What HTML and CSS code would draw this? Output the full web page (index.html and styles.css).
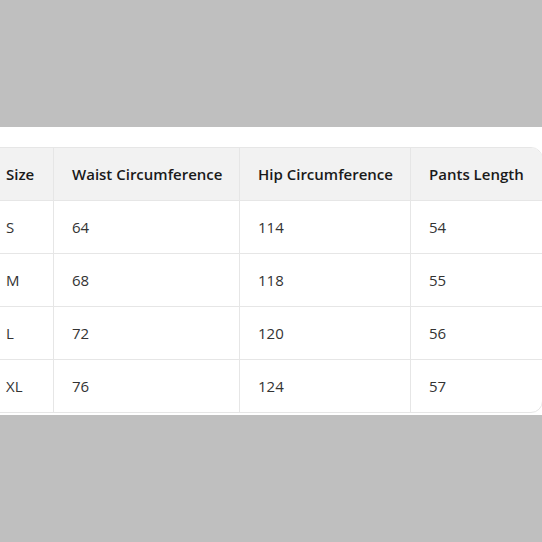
FILE: index.html
```html
<!DOCTYPE html>
<html>
<head>
<meta charset="utf-8">
<link rel="stylesheet" href="styles.css">
</head>
<body>
<div class="panel">
  <table class="size-table">
    <colgroup>
      <col class="c1"><col class="c2"><col class="c3"><col class="c4">
    </colgroup>
    <thead>
      <tr><th>Size</th><th>Waist Circumference</th><th>Hip Circumference</th><th>Pants Length</th></tr>
    </thead>
    <tbody>
      <tr><td>S</td><td>64</td><td>114</td><td>54</td></tr>
      <tr><td>M</td><td>68</td><td>118</td><td>55</td></tr>
      <tr><td>L</td><td>72</td><td>120</td><td>56</td></tr>
      <tr><td>XL</td><td>76</td><td>124</td><td>57</td></tr>
    </tbody>
  </table>
</div>
</body>
</html>
```
FILE: styles.css
```css
html, body {
  margin: 0;
  padding: 0;
  height: 100%;
}
body {
  background: #bfbfbf;
  display: flex;
  align-items: center;
  overflow: hidden;
  font-family: "Open Sans", "Noto Sans", sans-serif;
}
.panel {
  width: 100%;
  background: #ffffff;
  padding: 20px 0 2px;
  overflow: hidden;
}
.size-table {
  margin-left: -13px;
  width: 555px;
  table-layout: fixed;
  border-collapse: separate;
  border-spacing: 0;
  border: 1px solid #e6e6e6;
  border-radius: 12px;
  overflow: hidden;
}
.c1 { width: 66px; }
.c2 { width: 186px; }
.c3 { width: 171px; }
.c4 { width: 131px; }
.size-table th,
.size-table td {
  text-align: left;
  padding: 0 0 0 18px;
  height: 52px;
  border-right: 1px solid #e6e6e6;
  border-bottom: 1px solid #e6e6e6;
  white-space: nowrap;
}
.size-table th:last-child,
.size-table td:last-child {
  border-right: none;
}
.size-table tbody tr:last-child td {
  border-bottom: none;
}
.size-table th {
  background: #f2f2f2;
  color: #1a1a1a;
  font-weight: 600;
  font-size: 15px;
}
.size-table td {
  color: #333333;
  font-size: 15px;
}
```
